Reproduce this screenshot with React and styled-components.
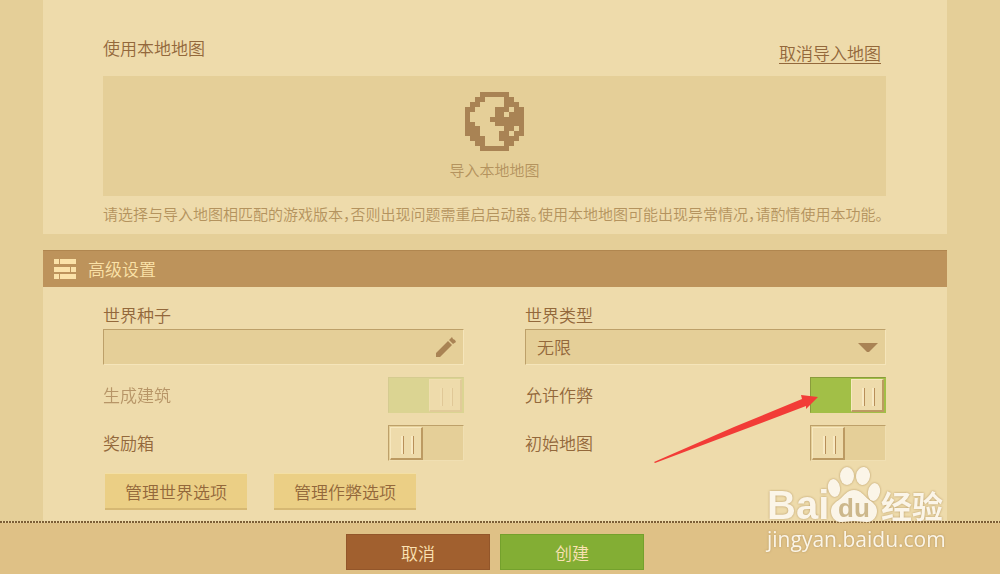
import React from "react";
import styled, { createGlobalStyle } from "styled-components";

const GlobalStyle = createGlobalStyle`
  *, *::before, *::after { box-sizing: border-box; }
  body {
    margin: 0;
    background: #e5cf98;
    color: #93683b;
    font-family: "Noto Sans CJK SC", sans-serif;
    font-size: 17px;
    font-weight: 350;
    line-height: 24px;
  }
  button, input, select { font: inherit; color: inherit; margin: 0; }
`;

const Page = styled.div`
  position: relative;
  display: flex;
  flex-direction: column;
  height: 100vh;
`;

const Content = styled.main`
  flex: 1;
  min-height: 0;
  overflow: hidden;
  display: flex;
  flex-direction: column;
  gap: 16px;
  padding: 0 53px 0 43px;
`;

const Panel = styled.section`
  flex: ${(p) => (p.$grow ? "1 0 auto" : "none")};
  background: #eedbab;
`;

const MapBody = styled.div`
  padding: 36px 61px 8px 60px;
`;

const MapHeader = styled.div`
  display: flex;
  justify-content: space-between;
  height: 40px;
`;

const PlainTitle = styled.h2`
  margin: 0;
  font-size: 17px;
  font-weight: inherit;
`;

const CancelLink = styled.a`
  margin: 5px 5px 0 0;
  color: inherit;
  text-underline-offset: 3px;
  text-decoration-thickness: 1px;
`;

const ImportBox = styled.button`
  display: flex;
  flex-direction: column;
  align-items: center;
  gap: 8px;
  width: 100%;
  height: 120px;
  padding: 16px 0 0;
  border: 0;
  background: #e5cf98;
  color: #b4935e;
  font-size: 15px;
  line-height: 22px;
`;

const Hint = styled.p`
  margin: 6px 0 0;
  color: #b4935e;
  font-size: 15px;
  line-height: 24px;
  white-space: nowrap;
  font-feature-settings: "halt";
`;

const PanelHeader = styled.header`
  display: flex;
  align-items: center;
  gap: 12px;
  height: 37px;
  padding: 0 11px;
  background: #bd935b;
  border-top: 1px solid #b0864f;
  color: #fbe2a8;
`;

const SettingsGrid = styled.div`
  display: grid;
  grid-template-columns: 1fr 1fr;
  column-gap: 61px;
  row-gap: 12px;
  padding: 16px 61px 0 60px;
`;

const Field = styled.div`
  display: flex;
  flex-direction: column;
  gap: 2px;
`;

const Control = styled.div`
  position: relative;
  display: flex;
`;

const inset = `
  width: 100%;
  height: 36px;
  padding: 0 40px 0 11px;
  border: 1px solid;
  border-color: #bda069 #f5e5ba #f5e5ba #bda069;
  border-radius: 0;
  outline: 0;
  appearance: none;
  background: #e5cf98;
`;

const TextInput = styled.input`${inset}`;
const Select = styled.select`${inset}`;

const ControlIcon = styled.svg`
  position: absolute;
  right: 8px;
  top: 8px;
  pointer-events: none;
`;

const ToggleRow = styled.div`
  position: relative;
  display: flex;
  align-items: center;
  justify-content: space-between;
  height: 36px;
`;

const ToggleLabel = styled.label`
  opacity: ${(p) => (p.$muted ? 0.6 : 1)};
`;

const Toggle = styled.input.attrs({ type: "checkbox" })`
  appearance: none;
  width: 76px;
  height: 36px;
  display: flex;
  justify-content: flex-start;
  padding: 1px;
  border: 1px solid;
  border-color: #bda069 #f0dfb2 #f0dfb2 #bda069;
  background: #e5cf98;

  &::before {
    content: "";
    width: 33px;
    height: 33px;
    border: 1px solid;
    border-width: 1px 2px 2px 1px;
    border-color: #f7e8bf #bc9a62 #bc9a62 #f7e8bf;
    background:
      linear-gradient(#b88f59, #b88f59) 12px 8px / 1px 18px no-repeat,
      linear-gradient(#f8e9c2, #f8e9c2) 10px 8px / 2px 18px no-repeat,
      linear-gradient(#b88f59, #b88f59) 22px 8px / 1px 18px no-repeat,
      linear-gradient(#f8e9c2, #f8e9c2) 20px 8px / 2px 18px no-repeat,
      #eedbab;
  }

  &:checked {
    justify-content: flex-end;
    background: #a2bf47;
    border-color: #8a9c3c #a2bf47 #a2bf47 #8a9c3c;
  }

  &:disabled { opacity: 0.24; }
`;

const Actions = styled.div`
  display: flex;
  gap: 27px;
  padding: 12px 62px 16px;
`;

const OptionButton = styled.button`
  width: 142px;
  height: 37px;
  padding: 1px 0 0;
  border: 0;
  border-top: 1px solid #f3dfa4;
  border-bottom: 2px solid #d6b873;
  background: #ebcf85;
`;

const Footer = styled.footer`
  position: relative;
  flex: none;
  display: flex;
  justify-content: center;
  gap: 10px;
  height: 53px;
  padding: 13px 10px 4px 0;
  background:
    repeating-linear-gradient(90deg, #7d5f36 0 2px, #ecd7a4 2px 3px) 0 0 / 100% 2px no-repeat,
    #dfc186;
`;

const FooterButton = styled.button`
  width: 144px;
  height: 36px;
  padding: 1px 0 0;
  border: 1px solid ${(p) => (p.$primary ? "#74a12c" : "#93562a")};
  background: ${(p) => (p.$primary ? "#83ae34" : "#a1602f")};
  color: #fbe2b4;
`;

const Arrow = styled.svg`
  position: absolute;
  right: 66px;
  top: 16px;
  pointer-events: none;
`;

const Watermark = styled.div`
  position: absolute;
  right: 54px;
  bottom: 18px;
  width: 179px;
  color: #fbf5e8;
  filter: drop-shadow(0 0 1px #b79a66);
  pointer-events: none;
`;

const WatermarkTop = styled.div`
  display: flex;
  align-items: flex-end;
  height: 58px;
  font-weight: 700;
`;

const Latin = styled.span`
  width: 60px;
  font-family: "Liberation Sans", sans-serif;
  font-size: 40px;
  line-height: 34px;
`;

const Paw = styled.div`
  position: relative;
  width: 54px;
  height: 58px;
`;

const PawText = styled.span`
  position: absolute;
  left: 0;
  right: 0;
  bottom: 1px;
  text-align: center;
  color: #cdb88c;
  font-family: "Liberation Sans", sans-serif;
  font-size: 26px;
  line-height: 26px;
`;

const Han = styled.span`
  font-size: 31px;
  line-height: 34px;
`;

const Site = styled.div`
  font-family: "Open Sans", sans-serif;
  font-size: 21px;
  font-weight: 400;
  line-height: 34px;
`;

const GLOBE = [
  "...######...",
  "..##....##..",
  ".##.....###.",
  "##....###.##",
  "#.....##.###",
  "#....#######",
  "##....######",
  "###.....##.#",
  "###....##.##",
  ".###...####.",
  "..##....##..",
  "...######...",
];

function Globe() {
  return (
    <svg width="59" height="59" viewBox="0 0 12 12" shapeRendering="crispEdges" fill="#a98354">
      {GLOBE.flatMap((row, y) =>
        [...row].map((c, x) => (c === "#" ? <rect key={`${x}-${y}`} x={x} y={y} width="1" height="1" /> : null))
      )}
    </svg>
  );
}

function ToggleField({ id, label, checked, disabled, children }) {
  return (
    <ToggleRow>
      <ToggleLabel htmlFor={id} $muted={disabled}>{label}</ToggleLabel>
      <Toggle id={id} defaultChecked={checked} disabled={disabled} />
      {children}
    </ToggleRow>
  );
}

export default function App() {
  return (
    <Page>
      <GlobalStyle />
      <Content>
        <Panel>
          <MapBody>
            <MapHeader>
              <PlainTitle>使用本地地图</PlainTitle>
              <CancelLink href="#cancel-import">取消导入地图</CancelLink>
            </MapHeader>
            <ImportBox type="button">
              <Globe />
              导入本地地图
            </ImportBox>
            <Hint>请选择与导入地图相匹配的游戏版本，否则出现问题需重启启动器。使用本地地图可能出现异常情况，请酌情使用本功能。</Hint>
          </MapBody>
        </Panel>

        <Panel $grow>
          <PanelHeader>
            <svg width="22" height="20" fill="#fbe2a8" shapeRendering="crispEdges">
              <path d="M0 0h5v5H0zM6 0h16v5H6zM0 8h16v5H0zM17 8h5v5h-5zM0 15h5v5H0zM6 15h16v5H6z" />
            </svg>
            <PlainTitle>高级设置</PlainTitle>
          </PanelHeader>
          <SettingsGrid>
            <Field>
              <label htmlFor="seed">世界种子</label>
              <Control>
                <TextInput id="seed" type="text" />
                <ControlIcon width="20" height="20" viewBox="0 0 20 20" fill="#a98354">
                  <path d="M0 20v-4L12 4l4 4L4 20zM13 3l3-3 1 2 2 1 1 2-3 2z" />
                </ControlIcon>
              </Control>
            </Field>
            <Field>
              <label htmlFor="world-type">世界类型</label>
              <Control>
                <Select id="world-type">
                  <option>无限</option>
                </Select>
                <ControlIcon width="20" height="20" viewBox="0 0 20 20" fill="#a98354">
                  <path d="M0 6h20l-9 9h-2z" />
                </ControlIcon>
              </Control>
            </Field>
            <ToggleField id="structures" label="生成建筑" checked disabled />
            <ToggleField id="cheats" label="允许作弊" checked>
              <Arrow width="166" height="70" viewBox="0 0 166 70" fill="#f23c37">
                <path d="M0 69 80 34 148 6 147 2 164 4 152 16 152 13 86 38 1 70z" />
              </Arrow>
            </ToggleField>
            <ToggleField id="bonus" label="奖励箱" />
            <ToggleField id="start-map" label="初始地图" />
          </SettingsGrid>
          <Actions>
            <OptionButton type="button">管理世界选项</OptionButton>
            <OptionButton type="button">管理作弊选项</OptionButton>
          </Actions>
        </Panel>
      </Content>

      <Footer>
        <FooterButton type="button">取消</FooterButton>
        <FooterButton type="button" $primary>创建</FooterButton>
      </Footer>

      <Watermark>
        <WatermarkTop>
          <Latin>Bai</Latin>
          <Paw>
            <svg width="54" height="58" viewBox="0 0 54 58" fill="#fbf5e8">
              <ellipse cx="7" cy="24" rx="6" ry="9" transform="rotate(-10 7 24)" />
              <ellipse cx="20" cy="12" rx="7" ry="9" />
              <ellipse cx="36" cy="12" rx="7" ry="9" transform="rotate(8 36 12)" />
              <ellipse cx="47" cy="28" rx="6" ry="9" transform="rotate(10 47 28)" />
              <path d="M27 26c7 0 10 6 14 9s9 6 9 12-4 11-10 11c-5 0-8-1-13-1s-8 1-13 1C8 58 4 53 4 47s5-9 9-12 7-9 14-9z" />
            </svg>
            <PawText>du</PawText>
          </Paw>
          <Han>经验</Han>
        </WatermarkTop>
        <Site>jingyan.baidu.com</Site>
      </Watermark>
    </Page>
  );
}
